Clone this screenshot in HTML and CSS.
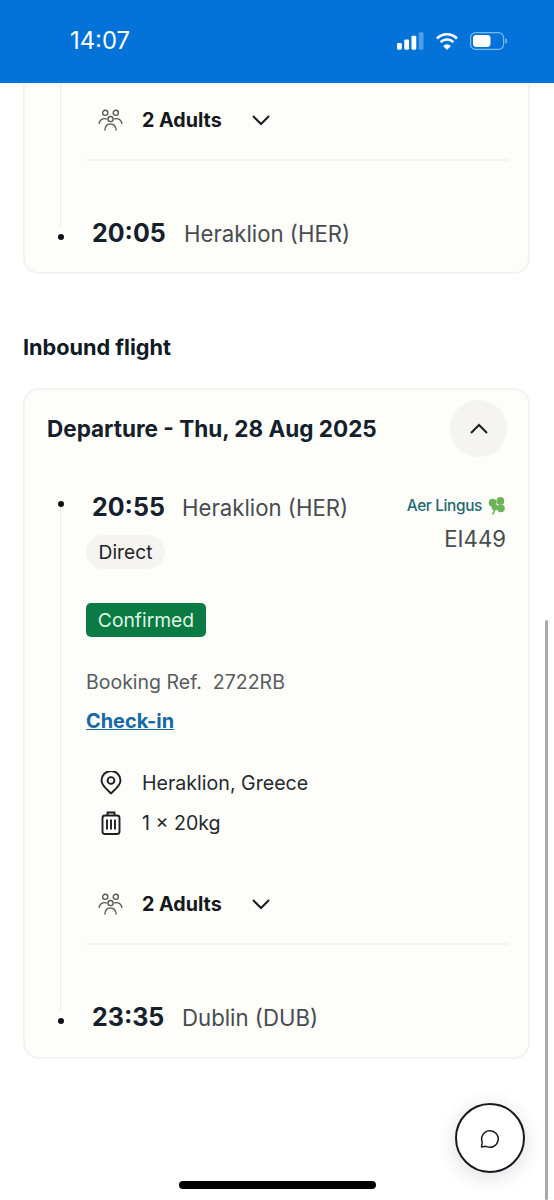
FILE: index.html
```html
<!DOCTYPE html>
<html lang="en">
<head>
<meta charset="utf-8">
<title>Flight details</title>
<link rel="stylesheet" href="styles.css">
</head>
<body>
<header class="status">
  <span class="clock">14:07</span>
  <div class="status-icons">
    <svg class="signal" viewBox="0 0 28 18" width="27" height="18"><rect x="0" y="11" width="5" height="7" rx="1.2" fill="#fff"/><rect x="7.5" y="7.5" width="5" height="10.5" rx="1.2" fill="#fff"/><rect x="15" y="3.5" width="5" height="14.5" rx="1.2" fill="#fff"/><rect x="22.5" y="0" width="5" height="18" rx="1.2" fill="#4f9fe8"/></svg>
    <svg class="wifi" viewBox="0 0 24 18" width="24" height="18"><path d="M2 6.5a14 14 0 0 1 20 0M5.6 10.2a9 9 0 0 1 12.8 0" fill="none" stroke="#fff" stroke-width="2.6"/><path d="M12 18l-3.800-4.100a5.400 5.400 0 0 1 7.600 0z" fill="#fff"/></svg>
    <svg class="battery" viewBox="0 0 38 18" width="38" height="18"><rect x=".6" y=".6" width="33" height="16.8" rx="5" fill="none" stroke="#7ab8f0" stroke-width="1.2"/><rect x="3" y="3" width="17.500" height="12" rx="3.400" fill="#fff"/><rect x="35.3" y="6.5" width="1.6" height="5" rx=".8" fill="#7ab8f0"/></svg>
  </div>
</header>

<main class="page">
  <section class="card card-clipped">
    <div class="leg leg-clipped">
      <div class="adults">
        <svg class="people" viewBox="0 0 26 24" width="25" height="23"><use href="#people-icon"/></svg>
        <b>2 Adults</b>
        <svg class="chev" viewBox="0 0 20 12" width="20" height="12"><path d="M2 2l8 8 8-8" fill="none" stroke="#1a1f24" stroke-width="2"/></svg>
      </div>
      <hr class="rule">
    </div>
    <div class="stop stop-end">
      <i class="dot"></i><strong class="time">20:05</strong><span class="place place-wide">Heraklion (HER)</span>
    </div>
  </section>

  <h2 class="section-title">Inbound flight</h2>

  <section class="card">
    <div class="card-head">
      <h3>Departure - Thu, 28 Aug 2025</h3>
      <button class="toggle" aria-label="Collapse"><svg viewBox="0 0 20 12" width="20" height="12"><path d="M2 10l8-8 8 8" fill="none" stroke="#1a1f24" stroke-width="2"/></svg></button>
    </div>
    <div class="leg leg-open">
      <div class="stop-row">
        <div class="stop">
          <i class="dot dot-start"></i><strong class="time">20:55</strong><span class="place">Heraklion (HER)</span>
        </div>
        <div class="carrier">
          <div class="airline"><span>Aer Lingus</span>
            <svg viewBox="1.5 0 17.5 18.5" width="18" height="19"><g fill="#6db35a"><circle cx="6" cy="6.500" r="3.800"/><circle cx="13.500" cy="4.800" r="3.800"/><circle cx="14" cy="12" r="3.800"/><circle cx="8" cy="11" r="3"/></g><path d="M10 9l-4 9" stroke="#6db35a" stroke-width="1.6"/></svg>
          </div>
          <div class="flight-no">EI449</div>
        </div>
      </div>
      <span class="pill">Direct</span>
      <span class="badge">Confirmed</span>
      <p class="ref">Booking Ref.&nbsp; 2722RB</p>
      <a class="checkin" href="#">Check-in</a>
      <ul class="facts">
        <li><svg viewBox="0 0 24 24" width="24" height="24"><path d="M12 22.500c-1-1.300-9.500-7.500-9.500-13a9.500 9.500 0 0 1 19 0c0 5.500-8.500 11.700-9.500 13z" fill="none" stroke="#1a1f24" stroke-width="1.9" stroke-linejoin="round"/><circle cx="12" cy="9.500" r="3.400" fill="none" stroke="#1a1f24" stroke-width="1.9"/></svg>Heraklion, Greece</li>
        <li><svg viewBox="0 0 24 24" width="24" height="24"><rect x="3.500" y="4.500" width="17" height="18.500" rx="2.500" fill="none" stroke="#1a1f24" stroke-width="1.9"/><path d="M8.500 4.500V1.500h7v3M8 8.500v10M12 8.500v10M16 8.500v10" fill="none" stroke="#1a1f24" stroke-width="1.9"/></svg>1 × 20kg</li>
      </ul>
      <div class="adults">
        <svg class="people" viewBox="0 0 26 24" width="25" height="23"><use href="#people-icon"/></svg>
        <b>2 Adults</b>
        <svg class="chev" viewBox="0 0 20 12" width="20" height="12"><path d="M2 2l8 8 8-8" fill="none" stroke="#1a1f24" stroke-width="2"/></svg>
      </div>
      <hr class="rule">
    </div>
    <div class="stop stop-end">
      <i class="dot"></i><strong class="time">23:35</strong><span class="place">Dublin (DUB)</span>
    </div>
  </section>
</main>

<div class="scrollbar"></div>
<button class="fab" aria-label="Chat"><svg viewBox="0 0 22 22" width="22" height="22"><path d="M2.500 20l.7-5A8.300 8.300 0 1 1 7 19.300z" fill="none" stroke="#1a1f24" stroke-width="1.5" stroke-linejoin="round"/></svg></button>
<div class="home-bar"></div>

<svg class="defs" width="0" height="0" aria-hidden="true"><defs><g id="people-icon" fill="none" stroke="#555" stroke-width="1.4"><circle cx="7.500" cy="4" r="2.700"/><circle cx="18.500" cy="4" r="2.700"/><circle cx="13" cy="10.500" r="2.700"/><path d="M1 15.500c.6-3.500 3-5.500 6-5.500 1 0 1.500.2 2.200.5M25 15.500c-.6-3.500-3-5.500-6-5.500-1 0-1.500.2-2.200.5M7 22.500c.4-4.500 3-7 6-7s5.600 2.500 6 7"/></g></defs></svg>
</body>
</html>
```
FILE: styles.css
```css
* { box-sizing: border-box; }
html, body { margin: 0; height: 1200px; overflow: hidden; background: #fff; }
body { font-family: Inter, "Liberation Sans", sans-serif; color: #14202b; position: relative; }

.status { height: 83px; background: #0373d9; color: #fff; display: flex; align-items: center; justify-content: space-between; padding: 0 46px 0 70px; }
.clock { font-size: 23.8px; font-weight: 400; position: relative; top: -1px; }
.status-icons { display: flex; align-items: center; gap: 11px; position: relative; top: -1px; }

.page { padding: 0 24px 0 23px; }
.card { background: #fdfdfa; border: 2px solid #f3f3f0; border-radius: 16px; padding-bottom: 21px; }
.card-clipped { border-top: 0; border-radius: 0 0 16px 16px; height: 191px; padding-bottom: 0; }

.leg { display: flow-root; margin-left: 35px; border-left: 1px solid #ececea; padding: 0 20px 0 25px; }
.leg-clipped { height: 145px; padding-top: 22px; }
.leg-open { margin-top: 46px; padding-bottom: 67px; }

.adults { display: flex; align-items: center; height: 30px; padding-left: 12px; font-size: 19.7px; color: #14181c; }
.adults b { font-weight: 700; margin-left: 19px; width: 109px; }
.leg-open .adults { margin-top: 46px; }
.rule { border: 0; border-top: 2px solid #f3f3f0; margin: 24px 0 0; }

.stop { display: flex; align-items: center; position: relative; }
.stop-end { margin: -14px 0 0 67px; height: 38px; }
.dot { position: absolute; left: -34px; top: 20px; width: 6px; height: 6px; border-radius: 50%; background: #0c1116; }
.time { font-size: 25px; font-weight: 700; line-height: 38px; color: #14202b; width: 90px; }
.place { font-size: 22.2px; color: #474c50; }
.place-wide { margin-left: 2px; }

.section-title { margin: 59px 0 27px; font-size: 21.7px; line-height: 28px; font-weight: 700; color: #0f1a24; }

.card-head { display: flex; align-items: center; justify-content: space-between; padding: 9px 21px 0 22px; height: 68px; }
.card-head h3 { margin: 0; font-size: 22.5px; font-weight: 700; color: #14202b; }
.toggle { width: 57px; height: 57px; border-radius: 50%; border: 0; background: #f5f4f1; display: flex; align-items: center; justify-content: center; padding: 0; }

.stop-row { display: flex; justify-content: space-between; margin-top: -16px; }
.stop-row .stop { height: 38px; margin-left: 6px; }
.stop-row .dot { left: -34px; top: 13px; }

.carrier { text-align: right; margin: -1px 2px 0 0; }
.airline { display: flex; align-items: center; justify-content: flex-end; gap: 6px; font-size: 15.4px; letter-spacing: -.35px; color: #1e6a72; font-weight: 500; height: 20px; margin-top: 8px; white-space: nowrap; }
.flight-no { font-size: 22.2px; color: #474c50; margin-top: 10px; line-height: 28px; }

.pill { display: block; width: 79px; height: 34px; line-height: 34px; text-align: center; margin-top: -18px; border-radius: 17px; background: #f5f4f1; font-size: 19.2px; color: #1e2328; }
.badge { display: block; width: 120px; height: 34px; line-height: 34px; text-align: center; margin-top: 34px; border-radius: 5px; background: #0b7a43; color: #def5e6; font-size: 19.3px; }
.ref { margin: 31px 0 0; font-size: 19.5px; line-height: 28px; color: #585c60; }
.checkin { display: block; margin-top: 11px; font-size: 19.9px; line-height: 28px; font-weight: 700; color: #1569a8; }

.facts { list-style: none; margin: 28px 0 0; padding: 0 0 0 13px; }
.facts li { display: flex; align-items: center; gap: 19px; height: 40px; font-size: 19.6px; color: #24292d; }

.scrollbar { position: absolute; right: 6px; top: 620px; width: 3px; height: 580px; background: #a9a9a9; border-radius: 2px; }
.fab { position: absolute; left: 455px; top: 1103px; width: 70px; height: 70px; border-radius: 50%; border: 2px solid #16191c; background: #fff; display: flex; align-items: center; justify-content: center; padding: 0; box-shadow: 0 4px 20px rgba(40,50,70,.16); }
.home-bar { position: absolute; left: 179px; top: 1181px; width: 197px; height: 8px; border-radius: 4px; background: #000; }
.defs { position: absolute; }
```
